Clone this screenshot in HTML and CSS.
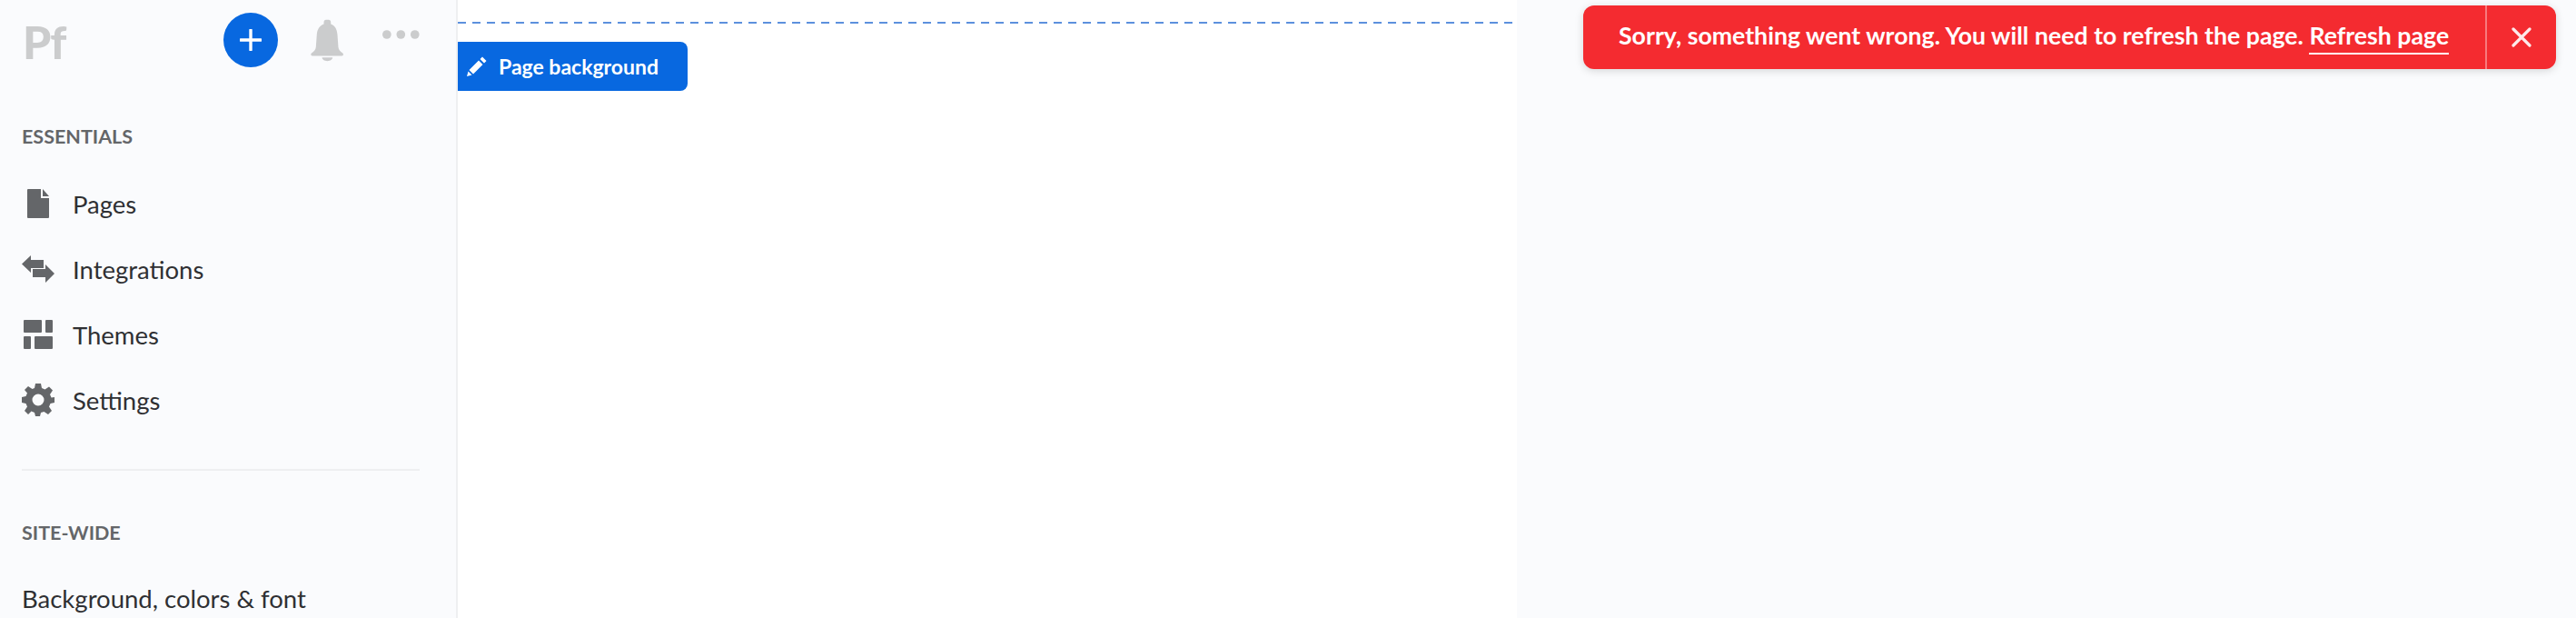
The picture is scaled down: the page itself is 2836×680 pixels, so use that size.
FILE: index.html
```html
<!DOCTYPE html>
<html lang="en">
<head>
<meta charset="utf-8">
<title>Portfolio editor</title>
<link rel="stylesheet" href="styles.css">
</head>
<body>
<div class="app">
  <aside class="sidebar">
    <header class="top">
      <span class="logo">Pf</span>
      <button class="add" aria-label="Add">
        <svg width="24" height="24" viewBox="0 0 24 24"><path d="M12 1v22M1 12h22" stroke="#fff" stroke-width="3.4" stroke-linecap="round"/></svg>
      </button>
      <svg class="bell" width="38" height="48" viewBox="0 0 38 48"><path fill="#cbcccd" d="M15 4c0-2 1-3 2.500-3h3C22 1 23 2 23 4v2c5 2 7 6 7.500 12l1 14c.3 3 2 5 5 7 1 .8 1 3-1 3H2c-2 0-2-2.200-1-3 3-2 4.700-4 5-7l1-14C7.500 12 10 8 15 6zM13 44h12c0 2-2.500 4-6 4s-6-2-6-4z"/></svg>
      <svg class="dots" width="42" height="10" viewBox="0 0 42 10"><g fill="#cbcccd"><circle cx="5" cy="5" r="5"/><circle cx="21" cy="5" r="5"/><circle cx="37" cy="5" r="5"/></g></svg>
    </header>
    <h2 class="section essentials">ESSENTIALS</h2>
    <nav class="nav">
      <a class="item"><span class="ico"><svg width="24" height="32" viewBox="0 0 24 32"><path fill="#646669" d="M1 0h14v10h9v21a1 1 0 0 1-1 1H1a1 1 0 0 1-1-1V1a1 1 0 0 1 1-1zM17 0l7 8h-7z"/></svg></span>Pages</a>
      <a class="item"><span class="ico"><svg width="36" height="30" viewBox="0 0 36 30"><path fill="#646669" d="M10 0v5h14v9H10v5L0 9.500zM26 10v5H12v9h14v6l10-10z"/></svg></span>Integrations</a>
      <a class="item"><span class="ico"><svg width="32" height="32" viewBox="0 0 32 32"><path fill="#646669" d="M1 0h18a1 1 0 0 1 1 1v12a1 1 0 0 1-1 1H1a1 1 0 0 1-1-1V1a1 1 0 0 1 1-1zM25 0h6a1 1 0 0 1 1 1v12a1 1 0 0 1-1 1h-6a1 1 0 0 1-1-1V1a1 1 0 0 1 1-1zM1 18h6a1 1 0 0 1 1 1v12a1 1 0 0 1-1 1H1a1 1 0 0 1-1-1V19a1 1 0 0 1 1-1zM13 18h18a1 1 0 0 1 1 1v12a1 1 0 0 1-1 1H13a1 1 0 0 1-1-1V19a1 1 0 0 1 1-1z"/></svg></span>Themes</a>
      <a class="item"><span class="ico"><svg width="36" height="36" viewBox="0 0 36 36"><path fill="#646669" fill-rule="evenodd" d="M15 0h6l1 5 3.500 1.500L30 3.500l4 4-3 4.500L32.500 15.500 36 15v6l-4.500 1L30 25.500l3 4.500-4 4-4.500-3L21 32l-1 4h-5l-1-4-3.500-1.500L7 34l-4-4 3-4.500L4.500 22 0 21v-6l4.500-1L6 10.500 3 7l4-4 4.500 3L14 5zM18 11.500a6.500 6.500 0 1 0 0 13 6.500 6.500 0 0 0 0-13z"/></svg></span>Settings</a>
    </nav>
    <hr class="rule">
    <h2 class="section sitewide">SITE-WIDE</h2>
    <a class="plain">Background, colors &amp; font</a>
  </aside>
  <main class="canvas">
    <div class="guide"></div>
    <button class="tag">
      <svg width="22" height="22" viewBox="0 0 22 22"><path fill="#fff" d="M17 0.500l4.500 4.500-2.500 2.500-4.500-4.500zM13 4.500l4.500 4.500L7 19.500 2.500 15zM1.500 16.500l4 4L0 22z"/></svg>
      Page background
    </button>
  </main>
  <div class="rest"></div>
</div>
<div class="toast" role="alert">
  <p class="msg">Sorry, something went wrong. You will need to refresh the page. <a class="link">Refresh page</a></p>
  <button class="close" aria-label="Close">
    <svg width="22" height="22" viewBox="0 0 22 22"><path d="M2 2l18 18M20 2L2 20" stroke="#fdeaea" stroke-width="3.200" stroke-linecap="round"/></svg>
  </button>
</div>
</body>
</html>
```
FILE: styles.css
```css
* { box-sizing: border-box; }
html, body { margin: 0; height: 680px; overflow: hidden; background: #fafbfd; }
body { font-family: Lato, "Open Sans", sans-serif; color: #2c2c2e; }
.app { display: flex; height: 680px; }

.sidebar { width: 504px; flex: none; background: #fafbfd; border-right: 2px solid #eeeff1; padding: 0 40px 0 24px; overflow: hidden; }
.top { display: flex; align-items: flex-start; height: 110px; }
.logo { font-size: 50px; font-weight: 900; color: #cbcccd; line-height: 52px; margin: 20px 0 0 1px; letter-spacing: -1px; width: 223px; }
.add { width: 60px; height: 60px; margin: 14px 0 0 5px; border: 0; border-radius: 50%; background: #0868e0; padding: 0; display: flex; align-items: center; justify-content: center; flex: none; }
.bell { margin: 20px 0 0 36px; }
.dots { margin: 33px 0 0 43px; }

.section { margin: 0; font-size: 21.500px; font-weight: 700; color: #646669; line-height: 28px; }
.essentials { margin-top: 26px; }
.nav { margin-top: 24px; }
.item { display: flex; align-items: center; height: 72px; font-size: 27.500px; color: #2f3033; }
.ico { width: 56px; flex: none; display: flex; justify-content: center; padding-right: 20px; }
.rule { border: 0; height: 2px; background: #eeeff1; margin: 40px 0 0; }
.sitewide { margin-top: 54px; }
.plain { display: block; margin-top: 39px; font-size: 27.500px; color: #2f3033; line-height: 40px; white-space: nowrap; }

.canvas { width: 1166px; flex: none; background: #fff; padding-top: 24px; }
.guide { height: 2px; background: repeating-linear-gradient(90deg, #5c90dd 0 9px, transparent 9px 16px); }
.tag { display: flex; align-items: center; gap: 13px; height: 54px; width: 253px; margin-top: 20px; padding: 0 0 0 10px; border: 0; border-radius: 0 8px 8px 0; background: #0868e0; color: #fff; font: 700 23px Lato, sans-serif; white-space: nowrap; }
.rest { flex: 1; background: #fafbfd; }

.toast { position: absolute; left: 1743px; top: 6px; width: 1071px; height: 70px; background: #f42b30; border-radius: 12px; box-shadow: 0 2px 10px rgba(0,0,0,.15); color: #fff; display: flex; align-items: stretch; }
.msg { margin: 0; flex: 1; padding-left: 39px; font-size: 26.700px; font-weight: 700; line-height: 66px; white-space: nowrap; }
.link { border-bottom: 2px solid #fff; padding-bottom: 3px; }
.close { width: 78px; flex: none; border: 0; border-left: 2px solid #f87a7d; background: none; padding: 0; display: flex; align-items: center; justify-content: center; }
```
